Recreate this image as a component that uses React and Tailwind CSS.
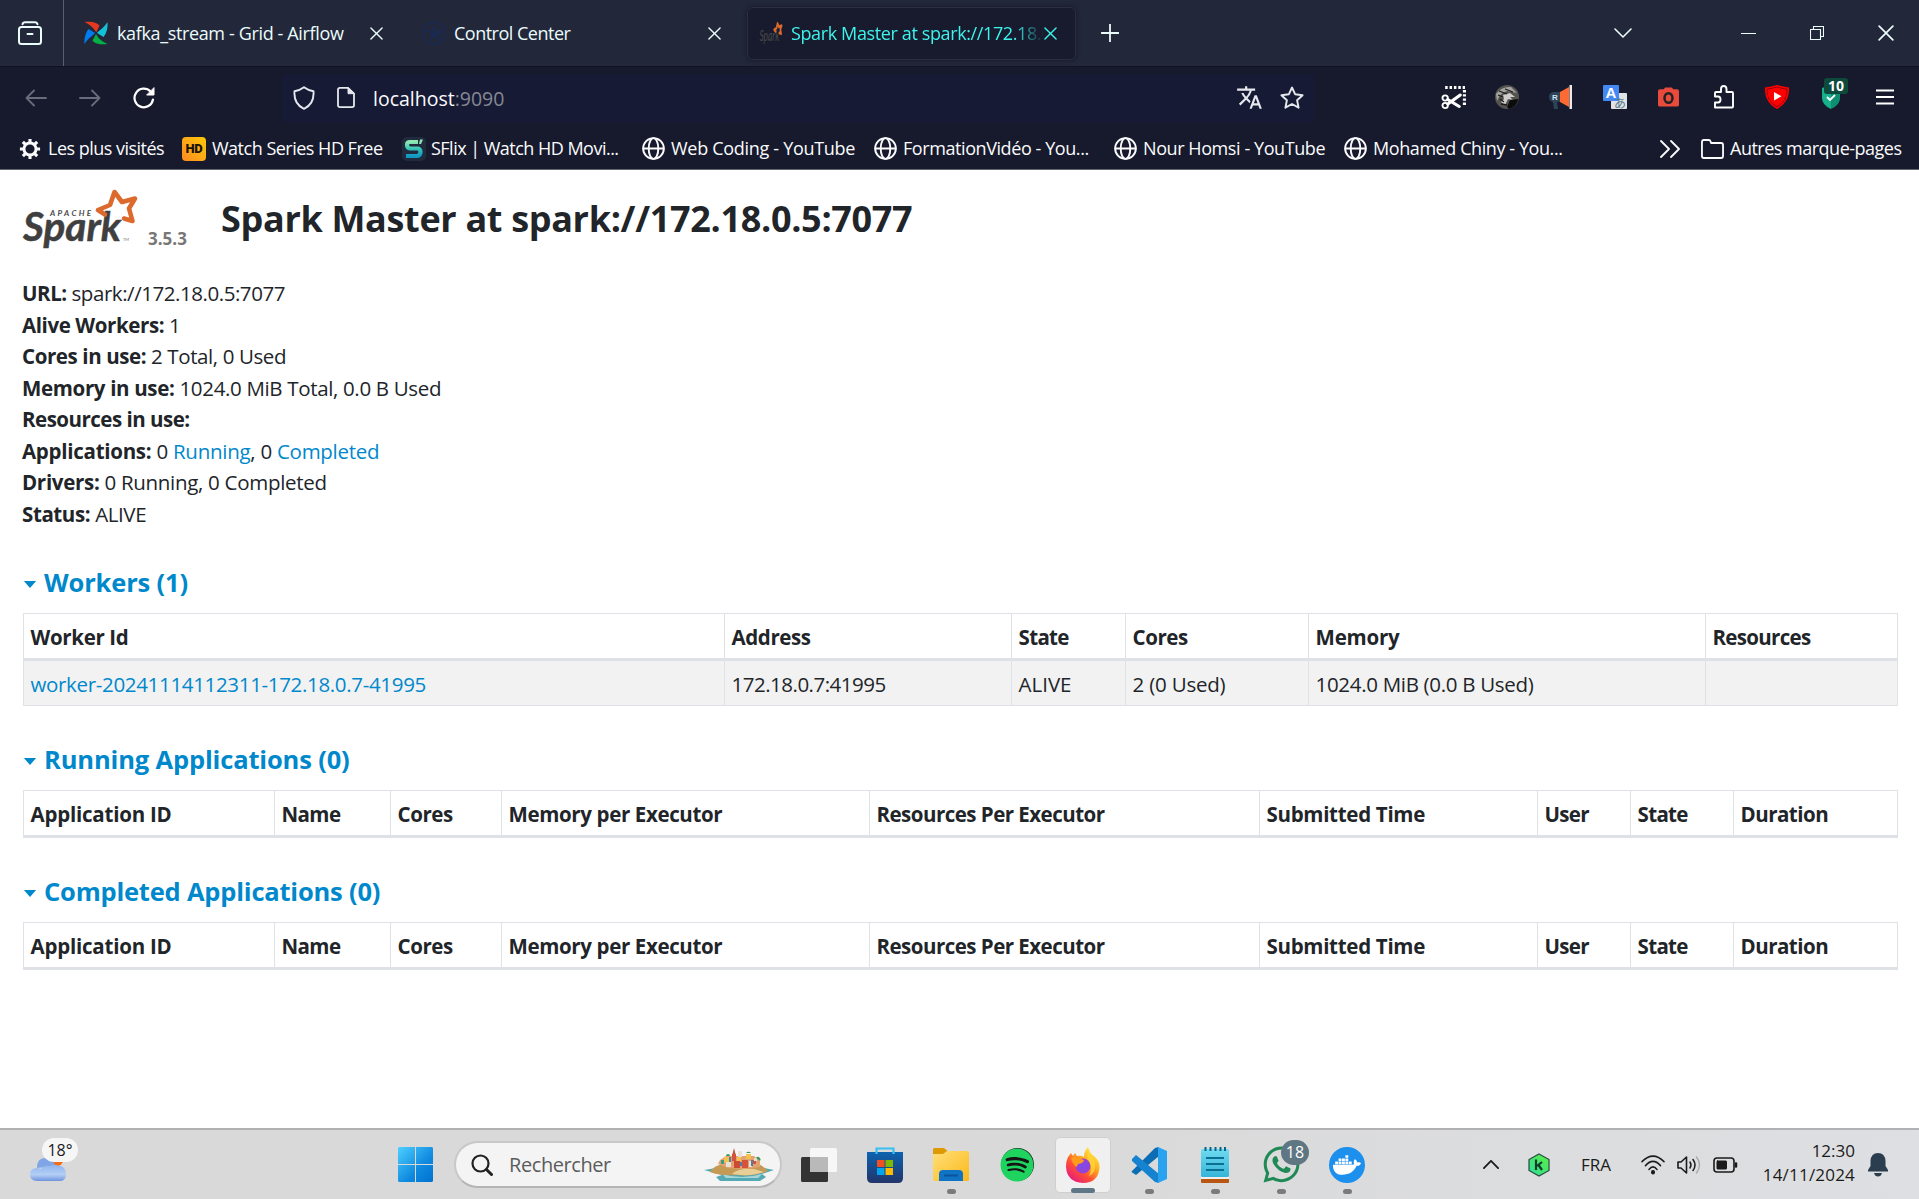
import React from "react";
import { MdTranslate } from "react-icons/md";
import { FaDocker, FaWhatsapp, FaSpotify } from "react-icons/fa";

function Svg({ className, box = "0 0 24 24", children }) {
  return (
    <svg
      viewBox={box}
      className={"shrink-0 " + className}
      fill="none"
      stroke="currentColor"
      strokeWidth="1.8"
      strokeLinecap="round"
      strokeLinejoin="round"
      preserveAspectRatio="none"
    >
      {children}
    </svg>
  );
}

function T({ className = "", children }) {
  return <span className={"block shrink-0 whitespace-nowrap " + className}>{children}</span>;
}

function Cross({ className }) {
  return (
    <Svg box="0 0 14 14" className={className}>
      <path d="M1 1 13 13M13 1 1 13" strokeWidth="1.5" />
    </Svg>
  );
}

function SparkStar(props) {
  return (
    <path
      d="M83 26.500 L76 22 L88 17 L92.500 4 L100 14 L113 10.500 L107 20.500 L110.500 33 L102 30.500"
      fill="none"
      stroke="#db6a2c"
      strokeLinejoin="round"
      strokeLinecap="round"
      {...props}
    />
  );
}

function TabBar() {
  return (
    <div className="flex h-[66px] shrink-0 items-center bg-[#23273a] text-[#eafcfc]">
      <Svg className="ml-[18px] h-6 w-6">
        <rect x="1" y="6" width="22" height="17" rx="2.5" strokeWidth="2" />
        <path d="M4.500 3.200Q5 1.200 7 1.200H17Q19 1.200 19.500 3.200M9.500 13h5" strokeWidth="2" />
      </Svg>
      <div className="ml-[21px] h-full w-px bg-[#5b5f70]" />
      <svg viewBox="0 0 24 24" className="ml-[20px] h-[24px] w-[24px] shrink-0">
        <path d="M0.500 1C6 0 13 1 15.500 4.500L12.500 11C10 9 9 5 0.500 1Z" fill="#e43921" />
        <path d="M23.500 1C24 8 22 13 19.500 16L13 12C15 9 18 9 23.500 1Z" fill="#11c3d6" />
        <path d="M23.500 23C18 24 11 23 8.500 19.500L12 13C14 16 15 19 23.500 23Z" fill="#04b045" />
        <path d="M0.500 23C0 17 2 11 4.500 8L11 12C9 15 6 15 0.500 23Z" fill="#017cee" />
      </svg>
      <T className="ml-[9px] w-[226px] text-[18px] tracking-[-0.36px]">kafka_stream - Grid - Airflow</T>
      <Cross className="ml-[27px] h-[13px] w-[13px]" />
      <Svg className="ml-[39px] h-6 w-6 text-[#182a55]">
        <circle cx="12" cy="12" r="11" strokeWidth="1.500" strokeDasharray="5 1" />
        <path d="M12 6v4M6 10l4 2M18 9l-4 3M9 17l3-4 4 5M16 13h2" strokeWidth="2.200" />
      </Svg>
      <T className="ml-[8px] w-[117px] text-[18px] tracking-[-0.5px]">Control Center</T>
      <Cross className="ml-[137px] h-[13px] w-[13px]" />
      <div className="ml-[26px] flex h-[53px] w-[329px] shrink-0 items-center rounded-[6px] border border-[#2b2e42] bg-[#171b2d] text-[#3df3ec] shadow-[0_0_5px_rgba(0,0,0,0.45)]">
        <svg viewBox="0 0 120 62" className="ml-[11px] h-[22px] w-[24px] shrink-0" preserveAspectRatio="none">
          <text x="2" y="54" fontFamily="Lato" fontStyle="italic" fontSize="42" fill="#4a4a4a">Spark</text>
          <SparkStar strokeWidth="8" />
        </svg>
        <div className="ml-[8px] w-[253px] overflow-hidden [mask-image:linear-gradient(to_right,black_88%,transparent)]">
          <T className="text-[18px] tracking-[-0.38px]">Spark Master at spark://172.18.0.5:7077</T>
        </div>
        <Cross className="h-[13px] w-[13px]" />
      </div>
      <Svg box="0 0 18 18" className="ml-[25px] h-[18px] w-[18px]">
        <path d="M9 0.500V17.500M0.500 9H17.500" strokeWidth="1.800" />
      </Svg>
      <div className="ml-auto flex items-center">
        <Svg box="0 0 18 10" className="h-[10px] w-[18px]">
          <path d="M1 1 9 9 17 1" strokeWidth="1.600" />
        </Svg>
        <div className="ml-[109px] h-px w-[15px] bg-[#eafcfc]" />
        <Svg box="0 0 14 14" className="ml-[54px] h-[14px] w-[14px]">
          <path d="M0.500 3.500h10v10h-10zM3.500 3V0.500h10v10H11" strokeWidth="1.100" />
        </Svg>
        <Cross className="ml-[54px] mr-[25px] h-[16px] w-[16px]" />
      </div>
    </div>
  );
}

function Extensions() {
  return (
    <div className="flex items-center pb-[2px]">
      <Svg className="h-6 w-[25px] text-white">
        <circle cx="4" cy="13" r="2.600" strokeWidth="1.800" />
        <circle cx="4" cy="20.500" r="2.600" strokeWidth="1.800" />
        <path d="M6.500 14.500 17.500 21.500M6.500 19 18.500 10" strokeWidth="3" />
        <path d="M4 2.500H23M22.500 5V20" strokeWidth="3" strokeDasharray="2.400 1.800" strokeLinecap="butt" />
      </Svg>
      <svg viewBox="0 0 24 24" className="ml-[29px] h-6 w-6 shrink-0">
        <circle cx="12" cy="12" r="12" fill="#55534f" />
        <path d="M1 9Q7 1 16 2L22 8 12 6Q5 8 2 16Z" fill="#a5a39f" />
        <path d="M8 10 15 8 20 12 15 12 18 15 13 14 10 20 6 17 9 14Z" fill="#d0ceca" />
        <path d="M15 15 23.500 14Q21.500 22 14 24L12 22Z" fill="#0c0c0d" />
        <path d="M4 6 12 9M3 10 8 12M10 4 18 7M5 14 9 17M6 19 12 20" stroke="#1b1b1c" strokeWidth="1.300" />
      </svg>
      <svg viewBox="0 0 24 24" className="ml-[30px] h-6 w-[24px] shrink-0">
        <path d="M4 7h7v10H8l1 7H5l-1-7Q0 16 0 12T4 7Z" fill="#2d4458" />
        <path d="M11 7 20 2V22L11 17Z" fill="#ff6a33" />
        <rect x="20.500" y="0" width="2.500" height="24" fill="#ece8e6" />
        <text x="3" y="14.500" fontSize="8" fontFamily="Liberation Sans" fontWeight="700" fill="#cfe0ee">R</text>
      </svg>
      <svg viewBox="0 0 24 24" className="ml-[30px] h-6 w-6 shrink-0">
        <rect x="8" y="8" width="16" height="16" rx="1" fill="#dfe3e6" />
        <rect width="16" height="16" rx="1" fill="#4488f4" />
        <text x="2.500" y="13" fontSize="15" fontFamily="Liberation Sans" fontWeight="700" fill="#fff">A</text>
        <text x="11" y="22.500" fontSize="12" fontFamily="Noto Sans CJK JP" fill="#5a7a8a">あ</text>
      </svg>
      <svg viewBox="0 0 22 20" className="ml-[31px] h-[20px] w-[21px] shrink-0">
        <path d="M2 2H6L7.500 0H14.500L16 2H20Q22 2 22 4V18Q22 20 20 20H2Q0 20 0 18V4Q0 2 2 2Z" fill="#e84b3c" />
        <ellipse cx="11" cy="11" rx="4.200" ry="5" fill="none" stroke="#222" strokeWidth="2.600" />
      </svg>
      <Svg className="ml-[34px] h-6 w-[22px] text-white" box="0 0 22 24">
        <path d="M2 22.500V17.500H5Q7.500 17.500 7.500 14.500T5 11.500H2V8Q2 7 3 7H8V4Q8 1 10.700 1T13.500 4V7H19Q20 7 20 8V21.500Q20 22.500 19 22.500Z" strokeWidth="1.900" />
      </Svg>
      <svg viewBox="0 0 24 24" className="ml-[30px] h-6 w-6 shrink-0">
        <path d="M12 0Q18 1.500 24 2.500 25 17 12 24 -1 17 0 2.500 6 1.500 12 0Z" fill="#f00" />
        <path d="M12 2Q17 3.500 22 4.200 22.500 16 12 21.800 1.500 16 2 4.200 7 3.500 12 2Z" fill="none" stroke="#8a0010" strokeWidth="0.900" />
        <path d="M9 7V15.500L16.500 11.300Z" fill="#fff" />
      </svg>
      <div className="relative ml-[33px] h-6 w-[18px] shrink-0">
        <svg viewBox="0 0 18 24" className="h-6 w-[18px]">
          <path d="M9 0 0 3V13Q0 20 9 24Z" fill="#16b08a" />
          <path d="M9 0 18 3V13Q18 20 9 24Z" fill="#0e8f72" />
          <path d="M5 12 8 15 13 10" fill="none" stroke="#fff" strokeWidth="1.800" />
        </svg>
        <span className="absolute -top-[7px] left-[2px] flex h-[16px] w-[24px] items-center justify-center rounded-[3px] bg-[#0d4a3b] font-['Open_Sans'] text-[14px] font-bold leading-none text-white">
          10
        </span>
      </div>
      <Svg box="0 0 18 16" className="ml-[36px] mr-[25px] h-[16px] w-[18px] text-white">
        <path d="M0.500 1.500h17M0.500 8h17M0.500 14.500h17" strokeWidth="2" />
      </Svg>
    </div>
  );
}

function NavBar() {
  return (
    <div className="flex h-[61px] shrink-0 items-center bg-[#161a2c] text-[#e6e8ee]">
      <Svg box="0 0 22 18" className="ml-[25px] h-[18px] w-[22px] text-[#696c7a]">
        <path d="M21 9H1.500M9 1.500 1.500 9 9 16.500" strokeWidth="1.800" />
      </Svg>
      <Svg box="0 0 22 18" className="ml-[32px] h-[18px] w-[22px] text-[#696c7a]">
        <path d="M1 9H20.500M13 1.500 20.500 9 13 16.500" strokeWidth="1.800" />
      </Svg>
      <Svg box="0 0 22 22" className="ml-[32px] h-[22px] w-[22px] text-white">
        <path d="M20 12.500A9.300 9.300 0 1 1 17.500 4.500" strokeWidth="2.200" />
        <path d="M21 1V8H14Z" fill="currentColor" strokeWidth="1" />
      </Svg>
      <div className="ml-[127px] flex h-[48px] w-[1033px] items-center rounded bg-[#161a34]">
        <Svg box="0 0 22 24" className="ml-[11px] h-6 w-[22px]">
          <path d="M11 1.200Q15 4.200 20.500 5.200 21.500 18 11 22.800 0.500 18 1.500 5.200 7 4.200 11 1.200Z" strokeWidth="1.900" />
        </Svg>
        <Svg box="0 0 18 22" className="ml-[22px] h-[21px] w-[18px]">
          <path d="M3 1H11L17 7V19Q17 21 15 21H3Q1 21 1 19V3Q1 1 3 1Z" strokeWidth="1.800" />
          <path d="M11 1V7H17Z" fill="currentColor" strokeWidth="1" />
        </Svg>
        <T className="ml-[18px] pt-[2px] text-[19.500px]">
          <span className="text-[#fbfbfe]">localhost</span>
          <span className="text-[#858895]">:9090</span>
        </T>
        <div className="ml-auto flex items-center">
          <MdTranslate className="h-[27px] w-[27px]" />
          <Svg className="ml-[17px] mr-[11px] h-6 w-6">
            <path d="M12 1.500 15.200 8.300 22.600 9.200 17.100 14.300 18.600 21.700 12 18 5.400 21.700 6.900 14.300 1.400 9.200 8.800 8.300Z" strokeWidth="1.900" />
          </Svg>
        </div>
      </div>
      <div className="ml-auto">
        <Extensions />
      </div>
    </div>
  );
}

function Globe({ className }) {
  return (
    <Svg className={"h-[23px] w-[23px] " + className}>
      <circle cx="12" cy="12" r="10.800" strokeWidth="2" />
      <ellipse cx="12" cy="12" rx="5" ry="10.800" strokeWidth="2" />
      <path d="M1.500 12H22.500" strokeWidth="2" />
    </Svg>
  );
}

function Bookmarks() {
  return (
    <div className="flex h-[41px] shrink-0 items-center bg-[#161a2c] text-[18px] tracking-[-0.42px] text-[#fbfbfe]">
      <Svg className="ml-[19px] h-[22px] w-[22px]">
        <circle cx="12" cy="12" r="6.600" strokeWidth="3.200" />
        <path
          d="M12 1v4M12 19v4M1 12h4M19 12h4M4.200 4.200l3 3M16.800 16.800l3 3M4.200 19.800l3-3M16.800 7.200l3-3"
          strokeWidth="3.400"
          strokeLinecap="butt"
        />
      </Svg>
      <T className="ml-[7px] w-[116px] tracking-[-0.52px]">Les plus visités</T>
      <div className="ml-[18px] flex h-6 w-6 shrink-0 items-center justify-center rounded-[4px] bg-linear-to-tr from-[#ff8a1f] to-[#ffc800] font-['Roboto'] text-[13px] font-black tracking-tight text-[#1b1408]">
        HD
      </div>
      <T className="ml-[6px] w-[171px] tracking-[-0.5px]">Watch Series HD Free</T>
      <div className="ml-[19px] flex h-6 w-6 shrink-0 items-center justify-center rounded-[5px] bg-[#202b3d]">
        <svg viewBox="0 0 20 20" className="h-5 w-5">
          <defs>
            <linearGradient id="sf" x1="0" y1="0" x2="0" y2="1">
              <stop offset="0" stopColor="#8ee6b0" />
              <stop offset="0.500" stopColor="#35c3b5" />
              <stop offset="1" stopColor="#1199c4" />
            </linearGradient>
          </defs>
          <path d="M14 3H6Q3 3 3 6T6 9.500H13Q16.500 9.500 16.500 13T13 17H2" fill="none" stroke="url(#sf)" strokeWidth="4.200" />
          <path d="M16 0.500H19L17 5H15Z" fill="#8ee6b0" />
        </svg>
      </div>
      <T className="ml-[5px] w-[188px] tracking-[-0.52px]">SFlix | Watch HD Movi...</T>
      <Globe className="ml-[23px]" />
      <T className="ml-[6px] w-[184px] tracking-[-0.3px]">Web Coding - YouTube</T>
      <Globe className="ml-[19px]" />
      <T className="ml-[6px] w-[187px]">FormationVidéo - You...</T>
      <Globe className="ml-[24px]" />
      <T className="ml-[6px] w-[183px]">Nour Homsi - YouTube</T>
      <Globe className="ml-[18px]" />
      <T className="ml-[6px] w-[190px]">Mohamed Chiny - You...</T>
      <div className="ml-auto flex items-center">
        <Svg box="0 0 20 18" className="h-[18px] w-5">
          <path d="M1 1 9 9 1 17M11 1 19 9 11 17" strokeWidth="1.800" />
        </Svg>
        <Svg box="0 0 24 20" className="ml-[21px] h-[20px] w-[23px]">
          <path d="M3 1H8Q9.500 1 10 2.500L10.500 4H21Q23 4 23 6V17Q23 19 21 19H3Q1 19 1 17V3Q1 1 3 1Z" strokeWidth="1.900" />
        </Svg>
        <T className="ml-[6px] mr-[17px] w-[172px] tracking-[-0.5px]">Autres marque-pages</T>
      </div>
    </div>
  );
}

function Info({ label, tracking, children }) {
  return (
    <li className="h-[31.570px]">
      <T className={"w-fit " + tracking}>
        <b>{label}</b> {children}
      </T>
    </li>
  );
}

function Heading({ className, tracking, children }) {
  return (
    <h4 className={"flex h-[32px] items-center text-[25.500px] font-bold leading-[32px] text-[#0088cc] " + className}>
      <svg viewBox="0 0 14 8" className="mt-[4px] mr-[7px] h-[7px] w-[14px] shrink-0">
        <path d="M0 0H14L7 8Z" fill="#0088cc" />
      </svg>
      <T className={tracking}>{children}</T>
    </h4>
  );
}

function HeaderRow({ grid, cols }) {
  return (
    <div className={"grid h-[48px] border border-b-[3px] border-[#dee2e6] font-bold " + grid}>
      {cols.map(([name, tracking], i) => (
        <div key={name} className={"flex items-center pt-[3px] pl-[6.500px] " + (i ? "border-l border-[#dee2e6]" : "")}>
          <T className={tracking}>{name}</T>
        </div>
      ))}
    </div>
  );
}

const appGrid = "grid-cols-[250px_116px_111px_368px_390px_278px_93px_103px_1fr]";
const appCols = [
  ["Application ID", "tracking-[-0.22px]"],
  ["Name", "tracking-[-0.6px]"],
  ["Cores", "tracking-[-0.4px]"],
  ["Memory per Executor", "tracking-[-0.36px]"],
  ["Resources Per Executor", "tracking-[-0.52px]"],
  ["Submitted Time", "tracking-[-0.3px]"],
  ["User", "tracking-[-0.7px]"],
  ["State", "tracking-[-0.65px]"],
  ["Duration", "tracking-[-0.5px]"],
];
const workerGrid = "grid-cols-[700px_287px_114px_183px_397px_1fr]";
const workerCols = [
  ["Worker Id", "tracking-[-0.35px]"],
  ["Address", "tracking-[-0.4px]"],
  ["State", "tracking-[-0.65px]"],
  ["Cores", "tracking-[-0.4px]"],
  ["Memory", "tracking-[-0.2px]"],
  ["Resources", "tracking-[-0.68px]"],
];
const worker = [
  ["worker-20241114112311-172.18.0.7-41995", "tracking-[-0.33px]"],
  ["172.18.0.7:41995", "tracking-[-0.5px]"],
  ["ALIVE", ""],
  ["2 (0 Used)", "tracking-[-0.2px]"],
  ["1024.0 MiB (0.0 B Used)", "tracking-[-0.31px]"],
  ["", ""],
];

function Page() {
  return (
    <main className="flex-1 bg-white pr-[21px] pl-[23px] text-[20.500px] leading-[31.500px] text-[#212529]">
      <header className="-ml-px flex h-[104px]">
        <svg viewBox="0 0 116 62" className="mt-[18px] h-[62px] w-[116px] shrink-0">
          <text x="28" y="28" fontFamily="Lato" fontStyle="italic" fontWeight="700" fontSize="8" textLength="41" fill="#4a4a4a">APACHE</text>
          <text x="1" y="53" fontFamily="Lato" fontStyle="italic" fontWeight="700" fontSize="40" textLength="98" lengthAdjust="spacingAndGlyphs" fill="#3f3f3f" stroke="#3f3f3f" strokeWidth="0.500">Spark</text>
          <text x="101" y="53" fontFamily="Lato" fontSize="4" fill="#777">TM</text>
          <SparkStar strokeWidth="4.600" />
        </svg>
        <T className="mt-[53px] ml-[10px] w-[40px] text-[17px] font-bold text-[#777]">3.5.3</T>
        <h3 className="mt-[24px] ml-[33px] text-[36px] font-bold leading-[50px]">
          <T className="tracking-[-0.32px]">Spark Master at spark://172.18.0.5:7077</T>
        </h3>
      </header>
      <ul className="mt-[4px] -ml-px h-[252px]">
        <Info label="URL:" tracking="tracking-[-0.45px]">spark://172.18.0.5:7077</Info>
        <Info label="Alive Workers:" tracking="tracking-[-0.4px]">1</Info>
        <Info label="Cores in use:" tracking="tracking-[-0.4px]">2 Total, 0 Used</Info>
        <Info label="Memory in use:" tracking="tracking-[-0.34px]">1024.0 MiB Total, 0.0 B Used</Info>
        <Info label="Resources in use:" tracking="tracking-[-0.5px]" />
        <Info label="Applications:" tracking="tracking-[-0.27px]">
          0 <a className="text-[#0088cc]">Running</a>, 0 <a className="text-[#0088cc]">Completed</a>
        </Info>
        <Info label="Drivers:" tracking="tracking-[-0.3px]">0 Running, 0 Completed</Info>
        <Info label="Status:" tracking="tracking-[-0.4px]">ALIVE</Info>
      </ul>
      <Heading className="mt-[36px]" tracking="tracking-[-0.15px]">Workers (1)</Heading>
      <div className="mt-[15px]">
        <HeaderRow grid={workerGrid} cols={workerCols} />
        <div className={"grid h-[45px] border border-t-0 border-[#dee2e6] bg-[#f2f2f2] " + workerGrid}>
          {worker.map(([text, tracking], i) => (
            <div key={i} className={"flex items-center pt-[3px] pl-[6.500px] " + (i ? "border-l border-[#dee2e6]" : "text-[#0088cc]")}>
              <T className={tracking}>{text}</T>
            </div>
          ))}
        </div>
      </div>
      <Heading className="mt-[37px]" tracking="tracking-[-0.15px]">Running Applications (0)</Heading>
      <div className="mt-[15px]">
        <HeaderRow grid={appGrid} cols={appCols} />
      </div>
      <Heading className="mt-[37px]" tracking="tracking-[-0.2px]">Completed Applications (0)</Heading>
      <div className="mt-[15px]">
        <HeaderRow grid={appGrid} cols={appCols} />
      </div>
    </main>
  );
}

function TaskIcon({ children, dot, active }) {
  return (
    <div className={"relative mx-[5px] flex h-[56px] w-[56px] shrink-0 items-center justify-center rounded-[5px] " + (active ? "border border-[#cfcfcf] bg-[#f0f0f0]" : "")}>
      {children}
      {dot && <span className="absolute -bottom-[1px] left-[24px] h-[5px] w-[9px] rounded-full bg-[#7b7b7b]" />}
      {active && <span className="absolute -bottom-px left-[15px] h-[5px] w-[24px] rounded-full bg-[#5f7686]" />}
    </div>
  );
}

function Taskbar() {
  return (
    <footer className="flex h-[71px] shrink-0 items-center border-t-2 border-[#b1b1b3] bg-linear-to-r from-[#d9d9da] via-[#d9d9d9] to-[#dedfe2] text-[#1b1b1b]">
      <div className="relative mb-[8px] ml-[30px] h-[45px] w-[50px] shrink-0">
        <svg viewBox="0 0 36 34" className="absolute top-[10px] left-0 h-[34px] w-[36px]">
          <defs>
            <linearGradient id="cl" x1="0" y1="0" x2="0" y2="1">
              <stop offset="0" stopColor="#8fb4ee" />
              <stop offset="0.600" stopColor="#b4cff6" />
              <stop offset="1" stopColor="#6c93de" />
            </linearGradient>
          </defs>
          <circle cx="25" cy="10" r="9" fill="#f26c1c" />
          <path d="M7 20Q7 10 15 10T25 18Z" fill="#7fa5e6" />
          <path d="M7 33Q0 33 0 26.500T7 20Q9 20 11 21 14 17 20 18 24 16 28 17.500 36 18 36 26T28 33Z" fill="url(#cl)" />
        </svg>
        <span className="absolute top-0 left-[12px] flex h-[24px] w-[36px] items-center justify-center rounded-full bg-[#f6f6f6] text-[16px]">18°</span>
      </div>
      <svg viewBox="0 0 35 35" className="ml-[318px] h-[35px] w-[35px] shrink-0">
        <defs>
          <linearGradient id="wn" x1="0" y1="0" x2="1" y2="1">
            <stop offset="0" stopColor="#4fd0ff" />
            <stop offset="0.600" stopColor="#0f8ae0" />
            <stop offset="1" stopColor="#0072d0" />
          </linearGradient>
        </defs>
        <path d="M1 0H17V17H0V1ZM18 0H34L35 1V17H18ZM0 18H17V35H1L0 34ZM18 18H35V34L34 35H18Z" fill="url(#wn)" />
      </svg>
      <div className="ml-[21px] flex h-[47px] w-[328px] shrink-0 items-center rounded-full border-2 border-[#c8c8cb] border-b-[#b5b5b8] bg-[#f4f4f4]">
        <Svg box="0 0 22 22" className="ml-[15px] h-[22px] w-[22px] text-[#222]">
          <circle cx="9.500" cy="9.500" r="8" strokeWidth="2.200" />
          <path d="M15.500 15.500 20.500 20.500" strokeWidth="3" />
        </Svg>
        <T className="ml-[16px] w-[102px] text-[20px] tracking-[-0.42px] text-[#5c5c5c]">Rechercher</T>
        <svg viewBox="0 0 70 34" className="ml-[93px] h-[34px] w-[70px] shrink-0">
          <path d="M0 22 12 20H60L70 22 58 26 62 29 56 33H16L12 29 18 27Z" fill="#54aab4" />
          <path d="M18 26Q38 32 58 26L54 30H22Z" fill="#a6d6d8" />
          <path d="M6 24Q10 17 20 16L50 14Q60 18 64 23 50 29 34 27 16 28 6 24Z" fill="#c59a55" />
          <path d="M28 26Q34 20 50 21L60 24Q46 29 28 26Z" fill="#e9cf97" />
          <path d="M16 12 22 8H50L56 13V19L40 21 24 20 14 16Z" fill="#e5a170" />
          <path d="M20 9h5v5h-5zM42 6h5v5h-5zM33 9h4v4h-4z" fill="#f3c34e" />
          <path d="M28 6h4v7h-4zM38 12h6v8h-6zM49 12h3v4h-3z" fill="#d5533a" />
          <path d="M34 3h4v6h-4zM22 14h5v5h-5zM50 10h3v3h-3zM45 13h3v6h-3z" fill="#e9e1d6" />
          <path d="M30 13h6v7h-6z" fill="#cc4b32" />
          <path d="M47 12h2v6h-2zM25 9h2v5h-2zM36 14h2v4h-2z" fill="#4d7fa8" />
          <path d="M17 12h3v4h-3z" fill="#3b9c80" />
          <path d="M42 5a3 3 0 0 1 5 0zM52 10a2 2 0 0 1 4 3zM22 8a2 2 0 0 1 4 0z" fill="#3e9a5c" />
          <path d="M30 0 31.500 6H28.500Z" fill="#b5543b" />
        </svg>
      </div>
      <div className="ml-[4px] flex items-center">
        <TaskIcon>
          <svg viewBox="0 0 36 34" className="h-[34px] w-[36px]">
            <rect y="9" width="27" height="25" rx="1.500" fill="#333" />
            <rect x="9" width="27" height="24" rx="1.500" fill="#f7f7f7" />
            <rect x="9" y="9" width="18" height="15" fill="#b9b9b9" />
          </svg>
        </TaskIcon>
        <TaskIcon>
          <svg viewBox="0 0 36 36" className="h-[36px] w-[36px]">
            <defs>
              <linearGradient id="st" x1="0" y1="0" x2="0" y2="1">
                <stop offset="0" stopColor="#0c63b0" />
                <stop offset="1" stopColor="#22356a" />
              </linearGradient>
            </defs>
            <path d="M0 5H36V31Q36 36 31 36H5Q0 36 0 31Z" fill="url(#st)" />
            <path d="M9.500 7V1.500H26.500V7" fill="none" stroke="#37c0f0" strokeWidth="2.200" />
            <rect x="10" y="13" width="7.500" height="7" fill="#f25022" />
            <rect x="18.500" y="13" width="7.500" height="7" fill="#7fba00" />
            <rect x="10" y="21" width="7.500" height="7" fill="#00a4ef" />
            <rect x="18.500" y="21" width="7.500" height="7" fill="#ffb900" />
          </svg>
        </TaskIcon>
        <TaskIcon dot>
          <svg viewBox="0 0 36 33" className="h-[33px] w-[36px]">
            <defs>
              <linearGradient id="fo" x1="0" y1="0" x2="1" y2="1">
                <stop offset="0" stopColor="#ffdf7a" />
                <stop offset="1" stopColor="#fbb91a" />
              </linearGradient>
            </defs>
            <path d="M0 1.500Q0 0 1.500 0H11L15 3.500 11 8H0Z" fill="#dd9a05" />
            <path d="M0 6H10L14 3H34.500Q36 3 36 4.500V31.500Q36 33 34.500 33H1.500Q0 33 0 31.500Z" fill="url(#fo)" />
            <path d="M6 33V26Q6 22 10 22H26Q30 22 30 26V33Z" fill="#1173c4" />
            <path d="M11 27.500H25" stroke="#0b549b" strokeWidth="2" />
          </svg>
        </TaskIcon>
        <TaskIcon>
          <div className="flex h-[33px] w-[33px] items-center justify-center rounded-full bg-[#151515]">
            <FaSpotify className="h-[34px] w-[34px] shrink-0 text-[#1fd35f]" />
          </div>
        </TaskIcon>
        <TaskIcon active>
          <svg viewBox="0 0 34 36" className="h-[36px] w-[34px]">
            <defs>
              <linearGradient id="fx" x1="0.900" y1="0.100" x2="0.200" y2="1">
                <stop offset="0" stopColor="#fff14a" />
                <stop offset="0.350" stopColor="#ffac1f" />
                <stop offset="0.650" stopColor="#ff4e36" />
                <stop offset="1" stopColor="#e31587" />
              </linearGradient>
              <radialGradient id="fp">
                <stop offset="0" stopColor="#7a4dea" />
                <stop offset="1" stopColor="#9a3fd4" />
              </radialGradient>
            </defs>
            <path d="M2 10 5 6 7 9 9 6 11 9Q15 8 18 10 18 4 22 0 24 7 28 9 34 14 33.500 21 32 36 17 36 1 35 0 20 0 14 2 10Z" fill="url(#fx)" />
            <circle cx="17" cy="19" r="7.500" fill="url(#fp)" />
            <path d="M5 11Q8 9 11 10 14 12 18 13 18 16 12 17 11 20 10 20 6 16 5 11Z" fill="#ff9b1c" />
            <path d="M22 5Q30 12 29 21 28 27 23 29 27 21 23 14 20 10 22 5Z" fill="#ffd637" opacity="0.800" />
          </svg>
        </TaskIcon>
        <TaskIcon dot>
          <svg viewBox="0 0 36 36" className="h-[36px] w-[36px]">
            <path d="M1 24 24 1 28 0V9L5 28 0.500 25Z" fill="#0b6db4" />
            <path d="M1 12 5 8 28 27V36L24 35 1 14Z" fill="#1583cf" />
            <path d="M27 0 36 4V32L27 36Z" fill="#29a3f0" />
          </svg>
        </TaskIcon>
        <TaskIcon dot>
          <svg viewBox="0 0 28 36" className="h-[36px] w-[28px]">
            <defs>
              <linearGradient id="np" x1="0" y1="0" x2="0" y2="1">
                <stop offset="0" stopColor="#6fdbf0" />
                <stop offset="1" stopColor="#35b4d8" />
              </linearGradient>
            </defs>
            <path d="M0 30H28V35Q28 36 27 36H1Q0 36 0 35Z" fill="#b85612" />
            <rect y="29" width="28" height="3" fill="#f1efee" />
            <rect y="2" width="28" height="28" rx="1.500" fill="url(#np)" />
            <path d="M4.500 0V4M9.500 0V4M14.500 0V4M19.500 0V4M24 0V4" stroke="#0b6488" strokeWidth="2" />
            <path d="M5 11H23M5 17H23M5 23H23" stroke="#0a6f93" strokeWidth="1.800" />
          </svg>
        </TaskIcon>
        <TaskIcon dot>
          <FaWhatsapp className="h-[41px] w-[41px] shrink-0 text-[#1f8a56]" />
          <span className="absolute top-[3px] left-[28px] flex h-[25px] w-[28px] items-center justify-center rounded-full bg-[#5f7683] text-[16px] leading-none text-white">18</span>
        </TaskIcon>
        <TaskIcon dot>
          <div className="flex h-[36px] w-[36px] items-center justify-center rounded-full bg-[#1d8fed]">
            <FaDocker className="h-[28px] w-[28px] text-white" />
          </div>
        </TaskIcon>
      </div>
      <div className="ml-auto flex items-center">
        <Svg box="0 0 18 10" className="h-[9px] w-[16px]">
          <path d="M1 9 9 1 17 9" strokeWidth="2" />
        </Svg>
        <svg viewBox="0 0 22 24" className="ml-[29px] h-[24px] w-[22px] shrink-0">
          <defs>
            <linearGradient id="kh" x1="1" y1="0" x2="0" y2="1">
              <stop offset="0" stopColor="#5df03e" />
              <stop offset="1" stopColor="#2bdc9c" />
            </linearGradient>
          </defs>
          <path d="M11 1 21 6.500V17.500L11 23 1 17.500V6.500Z" fill="url(#kh)" stroke="#2a4a44" strokeWidth="1.200" />
          <path d="M8 6.500V17M14 9 9 13M10.500 12 14 17" fill="none" stroke="#103a2c" strokeWidth="2.200" />
        </svg>
        <T className="ml-[31px] w-[31px] text-[17px]">FRA</T>
        <Svg className="ml-[29px] h-[20px] w-[24px]" box="0 0 24 18">
          <path d="M1 6Q12 -4 23 6M4.500 9.500Q12 2 19.500 9.500M8 13Q12 8.500 16 13" strokeWidth="1.500" />
          <circle cx="12" cy="15.500" r="1.500" fill="currentColor" strokeWidth="1" />
        </Svg>
        <Svg className="ml-[12px] h-[20px] w-[24px]" box="0 0 24 20">
          <path d="M1 7H4L9.500 2V18L4 13H1Z" strokeWidth="1.600" />
          <path d="M13 7Q15 10 13 13M16 4.500Q20 10 16 15.500" strokeWidth="1.500" />
          <path d="M19.500 2Q25.500 10 19.500 18" strokeWidth="1.400" stroke="#aaa" />
        </Svg>
        <Svg className="ml-[12px] h-[16px] w-[25px]" box="0 0 25 16">
          <rect x="1" y="1" width="20" height="14" rx="3" strokeWidth="1.600" />
          <rect x="4" y="4" width="9.500" height="8" rx="0.500" fill="currentColor" strokeWidth="1" />
          <path d="M23 6.500V9.500" strokeWidth="2.500" />
        </Svg>
        <div className="mb-[3px] ml-[24px] w-[93px] text-right text-[17px] leading-[24px]">
          <T>12:30</T>
          <T className="tracking-[0.2px]">14/11/2024</T>
        </div>
        <svg viewBox="0 0 20 24" className="ml-[13px] mr-[31px] h-[24px] w-[20px] shrink-0" fill="#2b3e50">
          <path d="M10 0Q17 0 17.500 8V13L20 17V18.500H0V17L2.500 13V8Q3 0 10 0ZM6 20H14Q13 23.500 10 23.500T6 20Z" />
        </svg>
      </div>
    </footer>
  );
}

export default function App() {
  return (
    <div className="flex h-[1199px] w-[1919px] flex-col overflow-hidden font-['Open_Sans','Noto_Sans',sans-serif]">
      <TabBar />
      <div className="h-px shrink-0 bg-[#10121f]" />
      <NavBar />
      <Bookmarks />
      <div className="h-px shrink-0 bg-[#62636f]" />
      <Page />
      <Taskbar />
    </div>
  );
}
